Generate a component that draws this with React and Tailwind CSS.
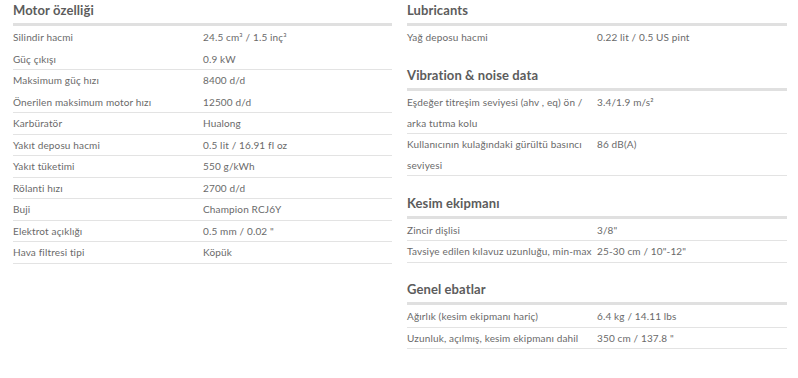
import React from 'react'

const motor = [
  { label: 'Silindir hacmi', value: '24.5 cm³ / 1.5 inç³', line: false },
  { label: 'Güç çıkışı', value: '0.9 kW', line: true },
  { label: 'Maksimum güç hızı', value: '8400 d/d', line: false },
  { label: 'Önerilen maksimum motor hızı', value: '12500 d/d', line: true },
  { label: 'Karbüratör', value: 'Hualong', line: true },
  { label: 'Yakıt deposu hacmi', value: '0.5 lit / 16.91 fl oz', line: true },
  { label: 'Yakıt tüketimi', value: '550 g/kWh', line: true },
  { label: 'Rölanti hızı', value: '2700 d/d', line: true },
  { label: 'Buji', value: 'Champion RCJ6Y', line: true },
  { label: 'Elektrot açıklığı', value: '0.5 mm / 0.02 "', line: true },
  { label: 'Hava filtresi tipi', value: 'Köpük', line: true },
]

const sections = [
  {
    title: 'Lubricants',
    rows: [{ label: 'Yağ deposu hacmi', value: '0.22 lit / 0.5 US pint', line: false }],
  },
  {
    title: 'Vibration & noise data',
    rows: [
      { label: 'Eşdeğer titreşim seviyesi (ahv , eq) ön / arka tutma kolu', value: '3.4/1.9 m/s²', line: true },
      { label: 'Kullanıcının kulağındaki gürültü basıncı seviyesi', value: '86 dB(A)', line: true },
    ],
  },
  {
    title: 'Kesim ekipmanı',
    rows: [
      { label: 'Zincir dişlisi', value: '3/8"', line: true },
      { label: 'Tavsiye edilen kılavuz uzunluğu, min-max', value: '25-30 cm / 10"-12"', line: true },
    ],
  },
  {
    title: 'Genel ebatlar',
    rows: [
      { label: 'Ağırlık (kesim ekipmanı hariç)', value: '6.4 kg / 14.11 lbs', line: true },
      { label: 'Uzunluk, açılmış, kesim ekipmanı dahil', value: '350 cm / 137.8 "', line: true },
    ],
  },
]

function SpecRow({ label, value, line }) {
  return (
    <div
      className={`flex border-b text-[10px] leading-[20.5px] tracking-[0.15px] text-[#6a6a6a] ${
        line ? 'border-[#e3e3e3]' : 'border-transparent'
      }`}
    >
      <div className="w-[190px] shrink-0 pr-[2px]">{label}</div>
      <div className="flex-1">{value}</div>
    </div>
  )
}

function SpecTable({ title, rows }) {
  return (
    <div>
      <h3 className="h-[23px] text-[13px] font-bold leading-[20px] tracking-[0.1px] text-[#5c5c5c]">{title}</h3>
      <div className="h-[3px] bg-[#e0e0e0]" />
      <div className="pt-px">
        {rows.map((r) => (
          <SpecRow key={r.label} {...r} />
        ))}
      </div>
    </div>
  )
}

export default function App() {
  return (
    <div
      className="flex h-[378px] w-[798px] gap-[15px] bg-white pl-[13px] pr-[11px]"
      style={{ fontFamily: 'Lato, "DejaVu Sans", sans-serif' }}
    >
      <div className="w-[379px]">
        <SpecTable title="Motor özelliği" rows={motor} />
      </div>
      <div className="flex w-[380px] flex-col gap-[16.5px]">
        {sections.map((s) => (
          <SpecTable key={s.title} {...s} />
        ))}
      </div>
    </div>
  )
}
